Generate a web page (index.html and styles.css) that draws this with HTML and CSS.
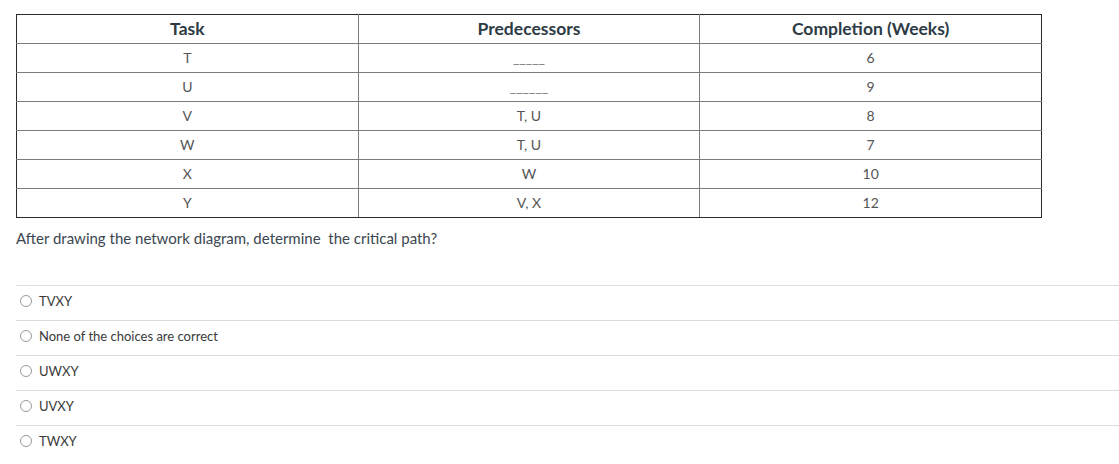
FILE: index.html
```html
<!DOCTYPE html>
<html>
<head>
<meta charset="utf-8">
<link rel="stylesheet" href="styles.css">
</head>
<body>
<div class="page">
  <table class="grid">
    <thead>
      <tr><th>Task</th><th>Predecessors</th><th>Completion (Weeks)</th></tr>
    </thead>
    <tbody>
      <tr><td>T</td><td class="dash">_____</td><td>6</td></tr>
      <tr><td>U</td><td class="dash">______</td><td>9</td></tr>
      <tr><td>V</td><td>T, U</td><td>8</td></tr>
      <tr><td>W</td><td>T, U</td><td>7</td></tr>
      <tr><td>X</td><td>W</td><td>10</td></tr>
      <tr><td>Y</td><td>V, X</td><td>12</td></tr>
    </tbody>
  </table>
  <p class="question">After drawing the network diagram, determine&nbsp; the critical path?</p>
  <div class="answers">
    <label class="answer"><span class="radio"></span><span>TVXY</span></label>
    <label class="answer"><span class="radio"></span><span>None of the choices are correct</span></label>
    <label class="answer"><span class="radio"></span><span>UWXY</span></label>
    <label class="answer"><span class="radio"></span><span>UVXY</span></label>
    <label class="answer"><span class="radio"></span><span>TWXY</span></label>
  </div>
</div>
</body>
</html>
```

FILE: styles.css
```css
html, body {
  margin: 0;
  padding: 0;
  background: #fff;
}
body {
  font-family: Lato, "Liberation Sans", sans-serif;
  color: #2d3b45;
}
.page {
  padding: 14px 0 0 16px;
}
.grid {
  border-collapse: collapse;
  width: 1026px;
  table-layout: fixed;
  border: 1px solid #2a2a2a;
}
.grid th, .grid td {
  border: 1px solid #7c7c7c;
  text-align: center;
  padding: 0;
  height: 28px;
  line-height: 16px;
}
.grid th {
  font-size: 17.5px;
  font-weight: 700;
  color: #2d3b45;
  line-height: 18px;
  height: 27px;
  padding-bottom: 1px;
}
.grid tr:first-child th { border-top-color: #2a2a2a; }
.grid th:first-child, .grid td:first-child { border-left-color: #2a2a2a; }
.grid th:last-child, .grid td:last-child { border-right-color: #2a2a2a; }
.grid tbody tr:last-child td { border-bottom-color: #2a2a2a; }
.grid td {
  font-size: 14px;
  color: #555;
}
.grid td.dash {
  color: #777;
}
.question {
  margin: 10px 0 0;
  font-size: 15px;
  line-height: 20px;
  color: #3b4650;
}
.answers {
  margin-top: 37px;
  display: flex;
  flex-direction: column;
}
.answer {
  display: flex;
  align-items: center;
  gap: 7px;
  padding-bottom: 4px;
  box-sizing: border-box;
  height: 35px;
  border-top: 1px solid #dcdcdc;
  padding-left: 4px;
  font-size: 13px;
  color: #3a3a3a;
}
.radio {
  width: 10px;
  height: 10px;
  border: 1px solid #999;
  border-radius: 50%;
  box-sizing: content-box;
  flex: none;
}
```
